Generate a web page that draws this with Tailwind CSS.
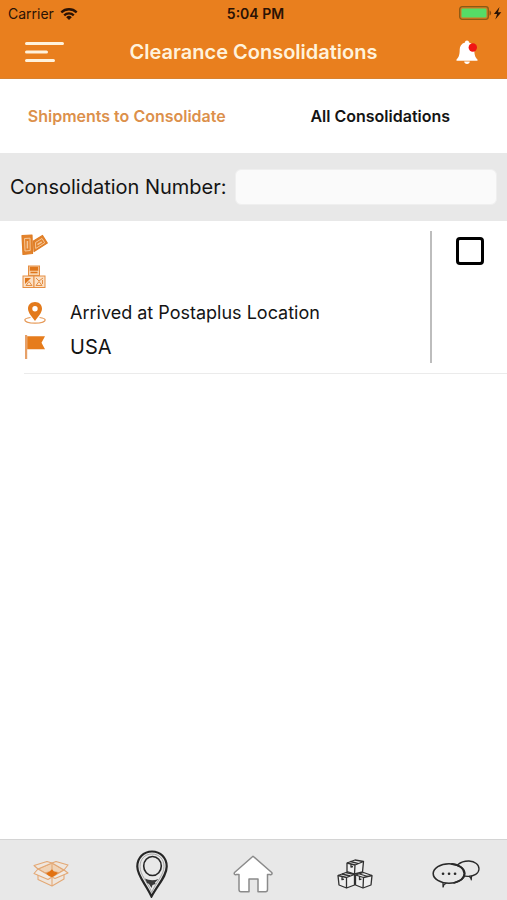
<!doctype html>
<html lang="en">

<head>
    <meta charset="UTF-8">
    <meta name="viewport" content="width=device-width, initial-scale=1.0">
    <title>Clearance Consolidations</title>
    <script src="https://cdn.jsdelivr.net/npm/@tailwindcss/browser@4"></script>
</head>

<body class="flex min-h-screen flex-col bg-white font-['Inter',sans-serif] text-[#141414]">
    <header class="border-b border-[#d9822f] bg-[#e97f1e]">
        <!-- Status bar -->
        <div class="grid h-[27px] grid-cols-3 items-center pr-1 pl-2 text-[#2a1205]">
            <div class="flex items-center gap-1.5 text-sm">
                <span>Carrier</span>
                <svg class="h-3.5 w-[18px]" viewBox="0 0 18 14" fill="none" stroke="currentColor" stroke-width="2.3" aria-hidden="true">
                    <path d="M1.3 5.3C5.6 1.2 12.4 1.2 16.7 5.3" />
                    <path d="M4.2 8.3c2.7-2.6 6.9-2.6 9.6 0" />
                    <path d="M9 13L6.2 10.2a4 4 0 0 1 5.6 0z" fill="currentColor" stroke="none" />
                </svg>
            </div>
            <div class="text-center text-sm font-semibold">5:04 PM</div>
            <svg class="h-4 w-11 justify-self-end" viewBox="0 0 44 16" aria-hidden="true">
                <rect x="0.7" y="0.7" width="28.6" height="12.6" rx="2.5" fill="#d57b22" stroke="#8b5a14" stroke-width="1.3" />
                <rect x="2.5" y="2.5" width="25" height="9" rx="1.2" fill="#55dc66" />
                <path d="M30.5 4.5c2.2.6 2.2 4.4 0 5z" fill="#8b4a0d" />
                <path d="M40.5 1l-5.600 7h3.2l-1.8 5.6 6-7.4h-3.3z" fill="currentColor" />
            </svg>
        </div>
        <!-- Title bar -->
        <div class="flex h-[51px] items-center justify-between px-6 pb-0.5">
            <button type="button" aria-label="Menu">
                <svg class="h-6 w-10" viewBox="0 0 40 24" fill="none" stroke="#fff2dc" stroke-width="3" stroke-linecap="round">
                    <path d="M2.5 3.5h36M2.5 12h20M2.5 20.5h27" />
                </svg>
            </button>
            <h1 class="text-xl font-semibold text-[#fff2dc]">Clearance Consolidations</h1>
            <button type="button" class="flex w-10 justify-center pl-2" aria-label="Notifications">
                <svg class="h-6 w-6" viewBox="0 0 24 24">
                    <path d="M12 .5c1.3 0 2 .8 2 1.900 3.600 1 5.300 3.800 5.300 7.100 0 5.600 1 8 3.200 9.900v1.300h-21v-1.300c2.200-1.900 3.200-4.300 3.200-9.900C4.700 6.200 6.400 3.400 10 2.400 10 1.300 10.700.5 12 .5z" fill="#fff" />
                    <path d="M9.200 21.500h5.600c0 1.600-1.200 2.500-2.800 2.500s-2.800-.9-2.800-2.500z" fill="#fff" />
                    <circle cx="17.800" cy="7.500" r="4.200" fill="#f01414" />
                </svg>
            </button>
        </div>
    </header>

    <nav class="grid h-[74px] grid-cols-2 text-base font-semibold">
        <button type="button" class="text-[#dc904b]">Shipments to Consolidate</button>
        <button type="button">All Consolidations</button>
    </nav>

    <form class="flex h-[68px] items-center gap-2 bg-[#e8e8e8] px-2.5">
        <label for="consolidationNumber" class="text-xl whitespace-nowrap">Consolidation Number:</label>
        <input type="text" id="consolidationNumber" class="h-9 min-w-0 flex-1 rounded-md border border-[#efefef] bg-[#fafafa] px-2">
    </form>

    <main class="flex-1">
        <ul>
            <li class="ml-6 flex border-b border-[#ebebeb] py-2.5">
                <div class="flex-1">
                    <div class="flex h-7 items-center">
                        <!-- Tickets -->
                        <svg class="-ml-1 h-6 w-7" viewBox="0 0 28 24" fill="none" stroke="#df7d25" aria-hidden="true">
                            <path d="M2 2.500L12 2l.5 18.500L3 21.500z" fill="#e3822b" stroke-width="1.200" stroke-linejoin="round" />
                            <path d="M4.500 5.500l5.500-.3.200 12.300-5.200.5z" stroke="#f6c797" />
                            <path d="M7.400 8v7.500" stroke="#f6c797" stroke-width="1.500" />
                            <path d="M13.500 8L22.500 2.500l4.800 7.500L14 18.500z" fill="#e3822b" stroke-width="1.200" stroke-linejoin="round" />
                            <path d="M15.500 9.500l6.500-4 2.700 4.300L15.700 15.500z" stroke="#f6c797" />
                            <path d="M17.500 11.700l4.300-2.900" stroke="#f6c797" stroke-width="1.500" />
                        </svg>
                    </div>
                    <div class="flex h-9 items-center">
                        <!-- Stacked boxes -->
                        <svg class="-ml-0.5 h-6 w-6" viewBox="0 0 24 24" fill="none" stroke="#e58e42" aria-hidden="true">
                            <rect x="6.500" y="1" width="11" height="9.500" fill="#f8d3ac" />
                            <path d="M8.500 2.500h7v2.500h-7zM8.500 7.500h7" fill="#df771c" stroke="#df771c" stroke-width="1.500" />
                            <rect x="1" y="11" width="11" height="11.500" fill="#fbe1c7" />
                            <rect x="12" y="11" width="11" height="11.500" fill="#fbe1c7" />
                            <path d="M3 13h6l-6 6z" fill="#df771c" stroke="none" />
                            <path d="M4 20.500l3-4 3 4zM14 20.500l3-4 3 4zM14 13l3 3 4-3M20.500 15v4" />
                        </svg>
                    </div>
                    <div class="flex h-9 items-center gap-6 text-lg">
                        <!-- Location pin -->
                        <svg class="h-[22px] w-[22px]" viewBox="0 0 22 22" fill="none" aria-hidden="true">
                            <path d="M6.500 15.500C2.800 16 .8 17 .8 18.100c0 1.700 4.500 3.100 10.200 3.100s10.200-1.400 10.200-3.100c0-1.100-2-2.100-5.700-2.600" stroke="#e69a59" stroke-width="1.200" />
                            <path fill-rule="evenodd" d="M11 0c4.200 0 7 2.800 7 6.700 0 4.200-4.300 8.200-7 12.300C8.300 14.900 4 10.900 4 6.700 4 2.800 6.800 0 11 0zm0 4a2.700 2.700 0 1 0 0 5.400 2.700 2.700 0 0 0 0-5.400z" fill="#e37a1c" />
                        </svg>
                        <span>Arrived at Postaplus Location</span>
                    </div>
                    <div class="flex h-8 items-center gap-6 text-xl">
                        <!-- Flag -->
                        <svg class="h-6 w-[22px]" viewBox="0 0 22 24" aria-hidden="true">
                            <path d="M1 0h2.200v24H1z" fill="#e6a068" />
                            <path d="M3.200 1.200H21l-3.500 6.500 3.500 6.500H3.200z" fill="#e67c1c" />
                        </svg>
                        <span>USA</span>
                    </div>
                </div>
                <div class="flex w-[77px] items-start justify-center border-l-2 border-[#bdbdbd] pt-1.5">
                    <input type="checkbox" aria-label="Select shipment" class="size-7 appearance-none rounded-sm border-[3px] border-black bg-white checked:bg-[#e97f1e]">
                </div>
            </li>
        </ul>
    </main>

    <footer class="grid h-[61px] grid-cols-5 border-t border-[#d4d4d4] bg-[#e8e8e8] pt-2">
        <a href="#shipments" class="flex items-center justify-center" aria-label="Shipments">
            <svg class="h-7 w-9" viewBox="0 0 36 28" fill="none" stroke="#e3a875" stroke-width="1.100" stroke-linejoin="round">
                <path d="M5 13v6.500l14 6.500 12-7V12l-12 5z" fill="#efe6dd" />
                <path d="M19 18v8" />
                <path d="M5 9l14-6 12 7-12 7z" fill="#f0d3b6" />
                <path d="M19 3v8l-9 2.500M19 11l8 2" />
                <path d="M5 9l-4 4.500 14 6 4-2.500zM31 10l4 3-13 5.500-3-1.500z" fill="#f1ebe5" />
                <path d="M5 9L1 5.500 14 1.500 19 3zM31 10l4-5-12-3.500-4 1.500z" fill="#efe6dd" />
                <path d="M14 13.500l3-1.500 2-2 1.500 2 3.500 1-2.500 2-2.500 1.500-2.500-1z" fill="#e27212" stroke="#e27212" />
            </svg>
        </a>
        <a href="#track" class="flex items-center justify-center" aria-label="Track">
            <svg class="h-12 w-8" viewBox="0 0 32 48" fill="none" stroke="#262626" stroke-width="2">
                <path d="M16 1.500C7.500 1.500 1.300 8 1.300 16.500 1.300 26 9.500 33.500 15.500 46.500 22 34.500 30.700 26 30.700 16.500 30.700 8 24.500 1.500 16 1.500z" stroke-width="2.200" />
                <path d="M16 4C8.500 4 4 9.500 4 16.500c0 8.500 7.500 15 11.700 26C19.500 33 28 25 28 16.500 28 9.500 23.500 4 16 4z" stroke="#8a8a8a" stroke-width="0.700" />
                <ellipse cx="16.500" cy="16" rx="8.800" ry="9.500" stroke-width="1.600" />
                <path d="M9 28.500c4.500 2.200 9 2.200 13.500.5l-3.500 3.500.5 1.500-3 1-1 3-2.500-4-2-1z" fill="#3a3a3a" stroke="none" />
            </svg>
        </a>
        <a href="#home" class="flex items-center justify-center" aria-label="Home">
            <svg class="h-[38px] w-10" viewBox="0 0 40 38" fill="#fff" stroke="#8b8b8b" stroke-width="1.500" stroke-linejoin="round">
                <path d="M20 1.200L1.500 17.500c-.8 1.500.4 2.500 1.800 2H6v15c0 1.600.6 2.300 2 2.300h8V24h9v12.800h7.500c1.400 0 2-.7 2-2.300v-15H37c1.400.5 2.600-.5 1.700-2z" />
            </svg>
        </a>
        <a href="#packages" class="flex items-center justify-center" aria-label="Packages">
            <svg class="h-[30px] w-9" viewBox="0 0 36 30" fill="#efefef" stroke="#303030" stroke-width="1.300" stroke-linejoin="round">
                <path d="M10 4l8-3 8.500 1.500L25.500 13l-8 2L10 12.500z" />
                <path d="M10 4l8 2 8.500-3.500M18 6l-.5 9M13.500 2.500l8 2.200M14 5v3l2-.5" fill="none" />
                <path d="M1 16.500l8-3 8.500 2V26l-8 3L2 26z" />
                <path d="M1 16.500l8.500 2 8-3M9.500 18.500V29M5 15l8 2M5 17.500v3.200l2-.5" fill="none" />
                <path d="M18.500 16l8-2.500 8.500 3L34 26l-8 3-7.500-3z" />
                <path d="M18.500 16l8 2.500 8.500-2M26.500 18.500L26 29M22.500 15l8.500 2.500M22.500 17.500v3l2-.3" fill="none" />
            </svg>
        </a>
        <a href="#chat" class="flex items-center justify-center" aria-label="Chat">
            <svg class="h-7 w-12" viewBox="0 0 48 28" fill="none" stroke="#292929" stroke-width="1.600" stroke-linecap="round">
                <path d="M26 4.500C29 2 33 .9 37 1c6 .2 10.200 3.500 10 8-.2 4.500-5 7.500-11 7.300l-3-.2" stroke-width="1.300" />
                <path d="M37.500 16.500c1 1 1.700 2 1.800 3.300M39.500 16.300l-.2 3.500" stroke-width="1.200" />
                <ellipse cx="17" cy="13.500" rx="15.800" ry="9.800" />
                <path d="M20 4c7 .6 12.300 4.300 12.300 9.500 0 4.300-4 7.700-10.300 9.300" stroke-width="1.800" />
                <path d="M14 23.500c-2 .5-2.700 1.700-2.800 3.500M11 23v4" stroke-width="1.200" />
                <path d="M11 13.700h.1M17 13.700h.1M23 13.700h.1" stroke-width="2.600" />
            </svg>
        </a>
    </footer>
</body>

</html>
